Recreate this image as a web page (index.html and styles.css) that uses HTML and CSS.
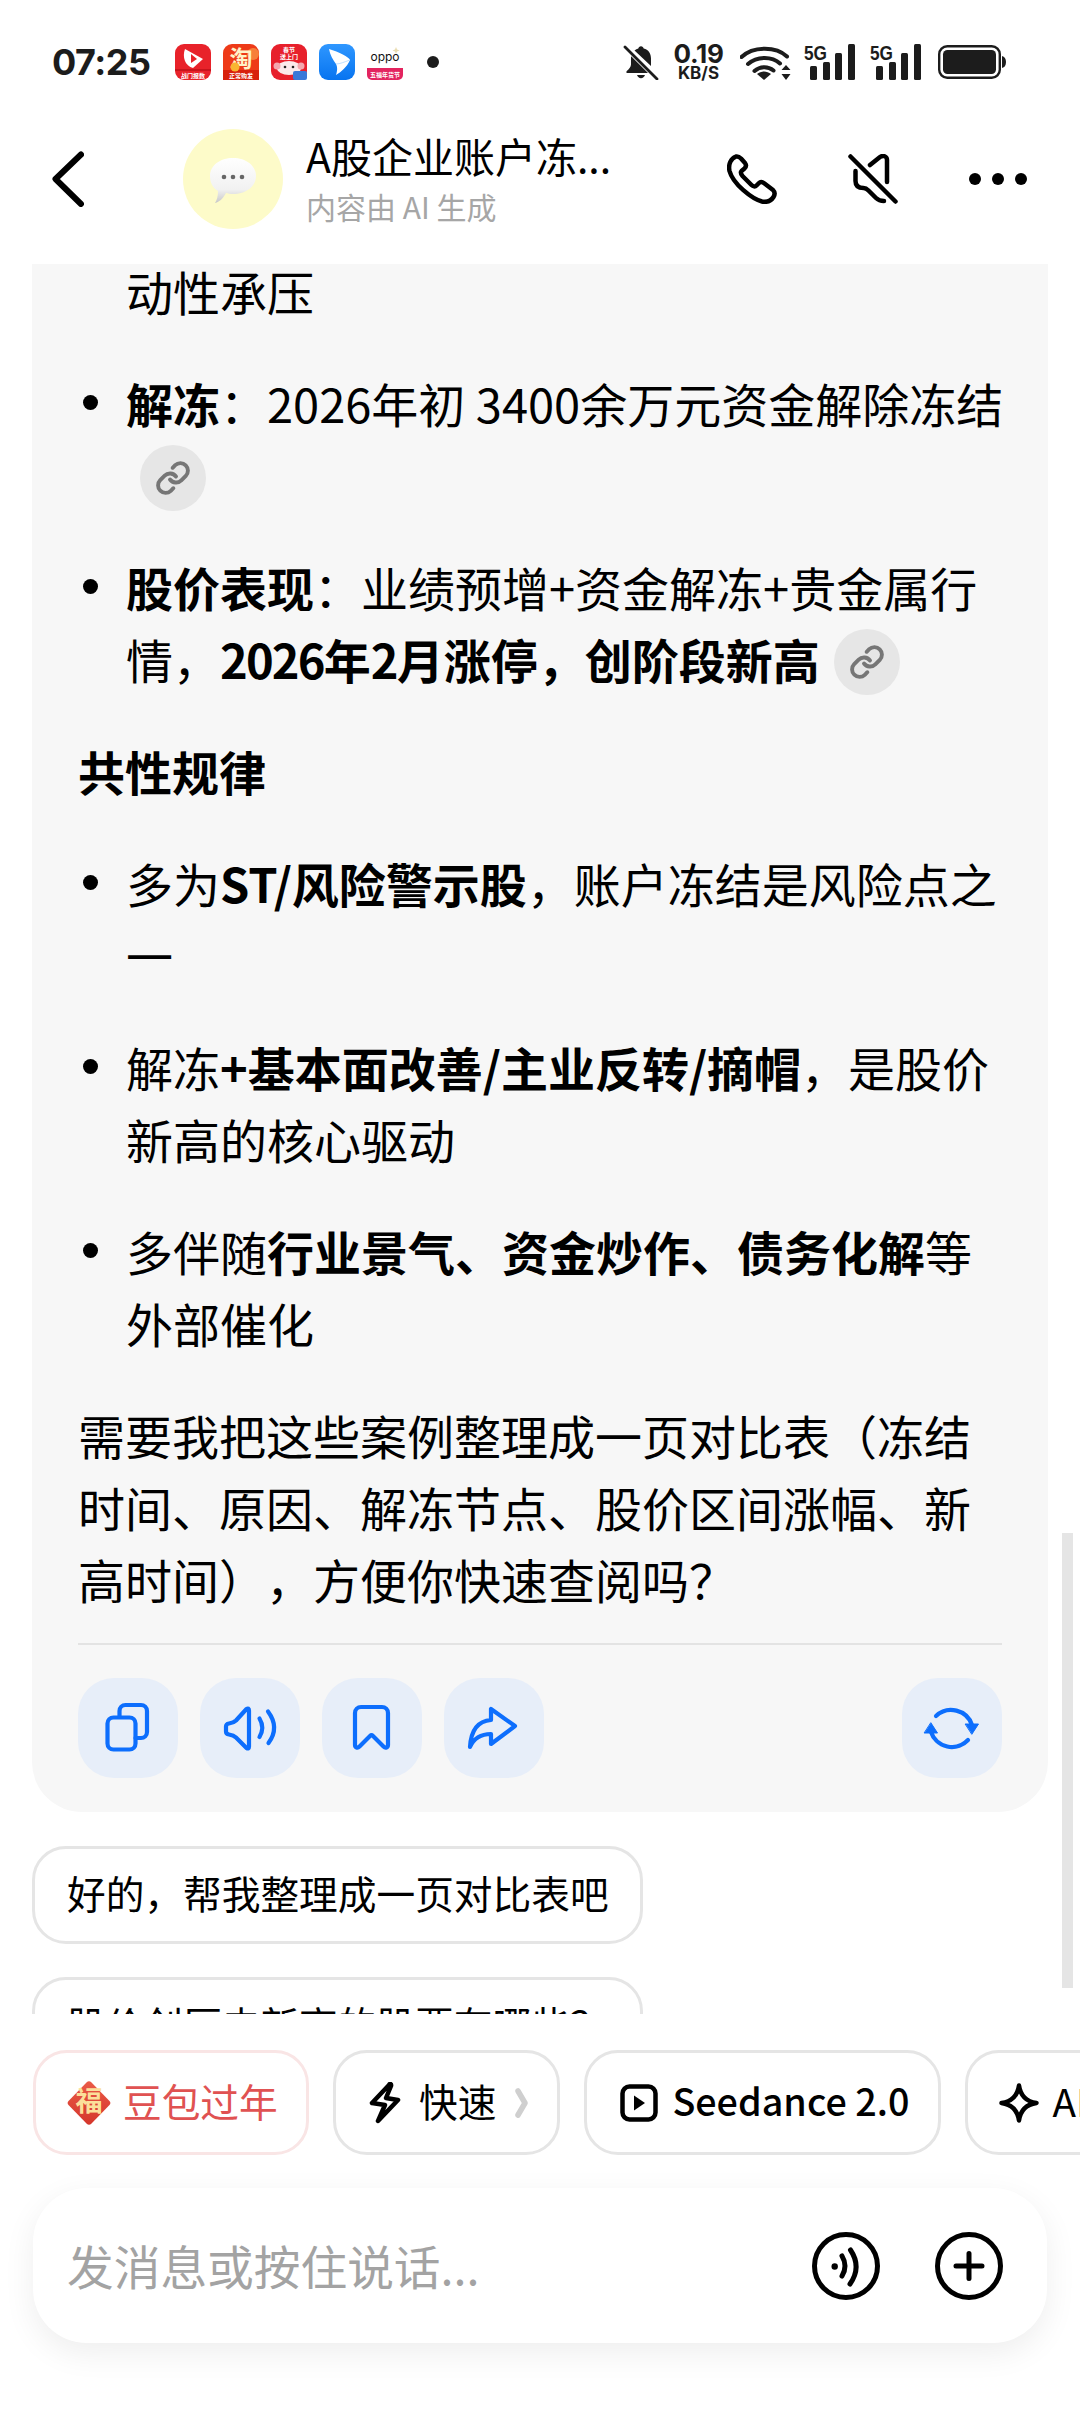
FILE: index.html
```html
<!DOCTYPE html>
<html lang="zh-CN">
<head>
<meta charset="utf-8">
<title>A股企业账户冻结</title>
<link rel="stylesheet" href="styles.css">
</head>
<body>
<svg class="defs" width="0" height="0" aria-hidden="true">
  <symbol id="link" viewBox="0 0 24 24"><path d="M10 13a5 5 0 0 0 7.54.54l3-3a5 5 0 0 0-7.07-7.07l-1.72 1.71"/><path d="M14 11a5 5 0 0 0-7.54-.54l-3 3a5 5 0 0 0 7.07 7.07l1.71-1.71"/></symbol>
</svg>
<div class="screen">
  <div class="status">
    <span class="time">07:25</span>
    <div class="apps">
      <svg class="app" viewBox="0 0 36 36"><rect width="36" height="36" rx="9" fill="#e8222a"/><path d="M0 25h36v2H0z" fill="#c8141c"/><path d="M10 5 L28 15 L18 24 C10 22 7 13 10 5Z" fill="#fff"/><path d="M16 10l6 5-6 4z" fill="#e8222a"/><text x="18" y="33.500" class="app-label">战门报数</text></svg>
      <svg class="app" viewBox="0 0 36 36"><rect width="36" height="36" rx="9" fill="#ee3a18"/><rect y="26" width="36" height="10" fill="#d8200c"/><circle cx="30" cy="10" r="6" fill="#f7803a"/><text x="18" y="23" class="app-big">淘</text><circle cx="12" cy="23" r="4.500" fill="#f9b531"/><text x="18" y="34" class="app-label">正常购发</text></svg>
      <svg class="app" viewBox="0 0 36 36"><rect width="36" height="36" rx="9" fill="#e7202c"/><text x="18" y="8" class="app-label">春节</text><text x="18" y="15" class="app-label">送上门</text><ellipse cx="18" cy="24" rx="12" ry="7" fill="#fbe9ea"/><circle cx="6" cy="22" r="3.500" fill="#f4a7ae"/><circle cx="30" cy="22" r="3.500" fill="#f4a7ae"/><circle cx="14" cy="23" r="1.300" fill="#222"/><circle cx="22" cy="23" r="1.300" fill="#222"/><rect x="22" y="27" width="14" height="9" rx="2" fill="#3a78d8"/></svg>
      <svg class="app" viewBox="0 0 36 36"><defs><linearGradient id="blue" x1="0" y1="0" x2="0" y2="1"><stop offset="0" stop-color="#2f97ff"/><stop offset="1" stop-color="#0774f0"/></linearGradient></defs><rect width="36" height="36" rx="9" fill="url(#blue)"/><path d="M10 5 C20 8 30 13 31 16 C28 23 22 28 17 31 C19 25 18 22 17 20 C14 16 11 11 10 5Z" fill="#fff"/><path d="M17 20 C21 20 25 18 31 16" stroke="#bfe0ff" stroke-width="1" fill="none"/></svg>
      <svg class="app" viewBox="0 0 36 36"><text x="18" y="17" class="oppo">oppo</text><path d="M29 3l1 2.500 2.500 1-2.500 1-1 2.500-1-2.500-2.500-1 2.500-1z" fill="#e9dcb0"/><path d="M0 24h36v7a5 5 0 0 1-5 5H5a5 5 0 0 1-5-5z" fill="#e3245f"/><text x="18" y="33" class="app-label">五福年货节</text></svg>
    </div>
    <span class="status-dot"></span>
    <div class="status-right">
      <svg class="s-bell" viewBox="0 0 36 35"><path d="M18 1.200c1.400 0 2.500 1 2.700 2.400 4.700 1.100 7.300 5 7.300 10v7.300L11.500 5.500C12.700 4.600 14 4 15.300 3.600 15.500 2.200 16.600 1.200 18 1.200zM8.200 11.300 25 28H3.500v-1.800c2.400-2 4.500-4.200 4.500-6.700v-6c0-.8 0-1.500.2-2.200zM14 30h8c-.6 2-2.200 3.200-4 3.200S14.600 32 14 30z" fill="#1c1c1c"/><path d="M2 2l32 32" stroke="#1c1c1c" stroke-width="2.800" stroke-linecap="round"/></svg>
      <div class="speed"><span class="speed-num">0.19</span><span class="speed-unit">KB/S</span></div>
      <svg class="s-wifi" viewBox="0 0 51 36" fill="none" stroke="#1c1c1c" stroke-width="4" stroke-linecap="round"><path d="M1.500 13C13 2 36 2 47 12.500"/><path d="M8 20C17 12 32 12 40 19.500"/><path d="M14.500 27C20 22 28 22 33.500 26.500"/><path d="M24 36l-7-6c4-3.500 10-3.500 14 0z" fill="#1c1c1c" stroke="none"/><path d="M46 21l4.500 5h-9zM46 36l4.500-6h-9z" fill="#1c1c1c" stroke="none"/></svg>
      <svg class="s-signal" viewBox="0 0 51 36"><text x="0" y="16" class="five-g" textLength="23" lengthAdjust="spacingAndGlyphs">5G</text><rect x="6" y="22" width="7" height="14" rx="1.500"/><rect x="19" y="18" width="7" height="18" rx="1.500"/><rect x="31" y="9" width="7" height="27" rx="1.500"/><rect x="44" y="0" width="7" height="36" rx="1.500"/></svg>
      <svg class="s-signal second" viewBox="0 0 51 36"><text x="0" y="16" class="five-g" textLength="23" lengthAdjust="spacingAndGlyphs">5G</text><rect x="6" y="22" width="7" height="14" rx="1.500"/><rect x="19" y="18" width="7" height="18" rx="1.500"/><rect x="31" y="9" width="7" height="27" rx="1.500"/><rect x="44" y="0" width="7" height="36" rx="1.500"/></svg>
      <svg class="s-batt" viewBox="0 0 68 34"><rect x="1.200" y="1.200" width="60.600" height="31.600" rx="8" fill="none" stroke="#1c1c1c" stroke-width="2.400"/><rect x="5" y="5" width="53" height="24" rx="4.500" fill="#1c1c1c"/><path d="M64 11c2.500.5 4 2.500 4 6s-1.500 5.500-4 6z" fill="#1c1c1c"/></svg>
    </div>
  </div>

  <header class="head">
    <svg class="back" viewBox="0 0 32 56" fill="none"><path d="M29 3.500 3.500 28 29 53" /></svg>
    <div class="avatar">
      <svg class="bubble" viewBox="0 0 46 46"><defs><linearGradient id="bub" x1="0" y1="0" x2="0" y2="1"><stop offset="0" stop-color="#fff"/><stop offset=".7" stop-color="#f1f1f1"/><stop offset="1" stop-color="#c8c8c8"/></linearGradient></defs><path d="M23 0c13 0 23 7.500 23 18s-10 18-23 18c-3 0-5-.5-7-1-2 4-6 9-11 10 2-3 3-7 3-12C3 30 0 25 0 18 0 7.500 10 0 23 0z" fill="url(#bub)"/><circle cx="14" cy="19" r="2.300" fill="#666"/><circle cx="23" cy="19" r="2.300" fill="#666"/><circle cx="32" cy="19" r="2.300" fill="#666"/></svg>
    </div>
    <div class="titles">
      <div class="title">A股企业账户冻...</div>
      <div class="subtitle">内容由 AI 生成</div>
    </div>
    <div class="head-actions">
      <svg class="phone" viewBox="0 0 50 50" fill="none"><path d="M9 2.500C11 2 12.500 3 14 4.500L18 9C19.500 11 19 13 17.500 14.500L14.500 17C13.500 18 14 20 15.500 22L24.500 31C26 32.500 28 33 29.500 31.500L32 29C33.500 27.500 35.500 28 37.500 29.500L46 36C48 38 48 40.500 46.500 43C44 47 40 48.500 35 47.500C25 45 6 30 2.500 17C1 10 4 4.500 9 2.500Z"/></svg>
      <svg class="mute" viewBox="0 0 50 50" fill="none"><path d="M2.500 2.500l45 45"/><path d="M22 11 32 3c3-2 7-1 7 3v22"/><path d="M7.500 17v10c0 5 3 7 8 7 2 0 3 .5 5 2.500L28 44c3 3 5 3 8 3"/></svg>
      <div class="more"><span></span><span></span><span></span></div>
    </div>
  </header>

  <main class="chat">
    <section class="card">
      <ul class="list">
        <li class="cont">动性承压</li>
        <li><b>解冻</b>：2026年初 3400余万元资金解除冻结<span class="ref"><svg class="ref-icon"><use href="#link"/></svg></span></li>
        <li><b>股价表现</b>：业绩预增+资金解冻+贵金属行情，<b><span class="num">2026</span>年<span class="num">2</span>月涨停，创阶段新高</b><span class="ref"><svg class="ref-icon"><use href="#link"/></svg></span></li>
      </ul>
      <p class="para"><b>共性规律</b></p>
      <ul class="list">
        <li>多为<b>ST/风险警示股</b>，账户冻结是风险点之一</li>
        <li>解冻<b>+基本面改善/主业反转/摘帽</b>，是股价新高的核心驱动</li>
        <li>多伴随<b>行业景气、资金炒作、债务化解</b>等外部催化</li>
      </ul>
      <p class="para">需要我把这些案例整理成一页对比表（冻结时间、原因、解冻节点、股价区间涨幅、新高时间），方便你快速查阅吗？</p>
      <div class="divider"></div>
      <div class="actions">
        <button class="act"><svg viewBox="0 0 100 100"><rect x="29.500" y="39.500" width="28" height="32" rx="6"/><path d="M41.500 39v-6a6 6 0 0 1 6-6H63a6 6 0 0 1 6 6v21a6 6 0 0 1-6 6h-5.500"/></svg></button>
        <button class="act"><svg viewBox="0 0 100 100"><path d="M46.500 31 36 42.500c-1.500 1.500-3.500 2.500-7 3-2 .3-3 1.500-3 3v5c0 1.500 1 2.700 3 3 3.500.5 5.500 1.500 7 3L46.500 70c1.500 1 2.500.5 2.500-1.500V32.500c0-2-1-2.500-2.500-1.500z"/><path d="M59.500 40.500Q65 49.500 59.500 59"/><path d="M68 33.500Q80 49.500 68.500 65"/></svg></button>
        <button class="act"><svg viewBox="0 0 100 100"><path d="M33 35a6 6 0 0 1 6-6h21a6 6 0 0 1 6 6v32c0 2.500-2.500 3.500-4.500 1.500L51 58c-1-1-2-1-3 0L37.500 68.500C35.500 70.500 33 69.500 33 67z"/></svg></button>
        <button class="act"><svg viewBox="0 0 100 100"><path d="M47 31v11C34 43 27 52 26 69c4-9 11-13 21-13v10l24-18z"/></svg></button>
        <button class="act last"><svg viewBox="0 0 100 100"><path d="M34 38A22 22 0 0 1 70 47"/><path d="M63.500 46h13L70 56z" class="solid"/><path d="M66 62A22 22 0 0 1 29 54"/><path d="M22.500 55h13L29 45z" class="solid"/></svg></button>
      </div>
    </section>
    <div class="suggest"><span>好的，帮我整理成一页对比表吧</span></div>
    <div class="suggest"><span>股价创历史新高的股票有哪些？</span></div>
  </main>
  <div class="scrollbar"></div>

  <nav class="chips">
    <div class="chip festive">
      <svg class="fu" viewBox="0 0 44 44"><defs><linearGradient id="fu" x1="0" y1="0" x2="0" y2="1"><stop offset="0" stop-color="#ea5a47"/><stop offset="1" stop-color="#d5362b"/></linearGradient></defs><path d="M19.500 1.500 1.500 20a3 3 0 0 0 0 4l18 18.500a3.500 3.500 0 0 0 5 0l18-18.500a3 3 0 0 0 0-4l-18-18.500a3.500 3.500 0 0 0-5 0z" fill="url(#fu)"/><text x="22" y="30" class="fu-text">福</text></svg>
      <span>豆包过年</span>
    </div>
    <div class="chip fast">
      <svg class="bolt" viewBox="0 0 32 42" fill="none"><path d="M20 3 3 21l13 2-7 16 20-21-12-2 5-12c.5-2-1-3-2-1z"/></svg>
      <span>快速</span>
      <svg class="chev" viewBox="0 0 13 30" fill="none"><path d="M3 3l7 12-7 12"/></svg>
    </div>
    <div class="chip video">
      <svg class="play" viewBox="0 0 38 38" fill="none"><rect x="2.500" y="2.500" width="33" height="33" rx="7"/><path d="M14 11.500v15l11-7.500z" class="fill"/></svg>
      <span class="medium">Seedance 2.0</span>
    </div>
    <div class="chip create">
      <svg class="star" viewBox="0 0 40 40" fill="none"><path d="M20 2.500C21.500 13 27 18.500 37.500 20 27 21.500 21.500 27 20 37.500 18.500 27 13 21.500 2.500 20 13 18.500 18.500 13 20 2.500z"/></svg>
      <span>AI 创作</span>
    </div>
  </nav>

  <div class="composer">
    <span class="placeholder">发消息或按住说话...</span>
    <svg class="round" viewBox="0 0 68 68" fill="none"><circle cx="34" cy="34" r="31.500"/><circle cx="22.700" cy="34.500" r="3.200" class="fill"/><path d="M30 24Q36 34 30 44"/><path d="M38.500 18Q50 35 38 52"/></svg>
    <svg class="round plus" viewBox="0 0 68 68" fill="none"><circle cx="34" cy="34" r="31.500"/><path d="M34 21.500v25M21 34h26"/></svg>
  </div>
</div>
</body>
</html>
```
FILE: styles.css
```css
* { box-sizing: border-box; }
html, body { margin: 0; padding: 0; background: #fff; }
body { font-family: "Noto Sans CJK SC", "Noto Sans", sans-serif; color: #000; text-spacing-trim: space-all; }
.defs { position: absolute; }
.screen { position: relative; width: 1080px; height: 2412px; overflow: hidden; background: #fff; display: flex; flex-direction: column; }

/* status bar */
.status { height: 124px; flex: none; display: flex; align-items: center; padding: 0 74px 0 52px; color: #1c1c1c; }
.time { font-family: Inter, Roboto, sans-serif; font-weight: 700; font-size: 36px; width: 123px; letter-spacing: -0.5px; }
.apps { display: flex; gap: 12px; }
.app { width: 36px; height: 36px; display: block; }
.app-label { font-size: 6px; fill: #fff; text-anchor: middle; font-weight: 700; }
.app-big { font-size: 23px; fill: #fff3c8; text-anchor: middle; font-weight: 700; }
.oppo { font-family: Inter, sans-serif; font-size: 12px; fill: #111; text-anchor: middle; }
.status-dot { width: 12px; height: 12px; border-radius: 50%; background: #1c1c1c; margin-left: 24px; }
.status-right { margin-left: auto; display: flex; align-items: center; }
.s-bell { width: 36px; height: 35px; }
.speed { display: flex; flex-direction: column; align-items: center; margin-left: 14px; width: 51px; font-family: Inter, Roboto, sans-serif; font-weight: 700; white-space: nowrap; }
.speed-num { font-size: 26px; line-height: 22px; letter-spacing: -0.3px; }
.speed-unit { font-size: 17px; line-height: 16px; }
.s-wifi { width: 51px; height: 36px; margin-left: 16px; }
.s-signal { width: 51px; height: 36px; margin-left: 13px; fill: #1c1c1c; }
.s-signal.second { margin-left: 15px; }
.five-g { font-family: "Liberation Sans", sans-serif; font-weight: 700; font-size: 21px; }
.s-batt { width: 68px; height: 34px; margin-left: 17px; }

/* header */
.head { height: 140px; flex: none; display: flex; align-items: center; padding: 0 53px 30px 52px; }
.back { width: 32px; height: 56px; flex: none; }
.back path { stroke: #000; stroke-width: 6; stroke-linecap: round; stroke-linejoin: round; }
.avatar { width: 100px; height: 100px; border-radius: 50%; background: #fdfbc9; margin-left: 99px; display: flex; align-items: center; justify-content: center; flex: none; }
.bubble { width: 46px; height: 46px; margin-top: 4px; }
.titles { margin: 0 0 5px 23px; display: flex; flex-direction: column; }
.title { font-size: 41px; line-height: 52px; white-space: nowrap; }
.subtitle { font-size: 30px; line-height: 38px; color: #a6a6a6; white-space: nowrap; margin-top: 6px; }
.head-actions { margin-left: auto; display: flex; align-items: center; gap: 71px; }
.phone, .mute { width: 50px; height: 50px; display: block; }
.phone path, .mute path { stroke: #000; stroke-width: 4.500; stroke-linecap: round; stroke-linejoin: round; }
.more { display: flex; gap: 11px; }
.more span { width: 12px; height: 12px; border-radius: 50%; background: #000; }

/* conversation */
.chat { height: 1750px; flex: none; overflow: hidden; padding: 0 32px; }
.card { margin-top: -100px; padding: 91px 46px 34px; background: #f7f7f7; border-radius: 50px; }
.list { margin: 0 -6px 40px 0; padding: 0 0 0 48px; list-style: none; }
.list li { position: relative; font-size: 47px; line-height: 72px; margin-bottom: 40px; }
.list li::before { content: ""; position: absolute; left: -43px; top: 28px; width: 15px; height: 15px; border-radius: 50%; background: #000; }
.list li.cont::before { display: none; }
.list li:last-child { margin-bottom: 0; }
.para { font-size: 47px; line-height: 72px; margin: 0 0 40px; }
.para:last-of-type { margin-bottom: 0; }
b { font-weight: 700; }
.num { letter-spacing: -1.8px; }
.ref { display: inline-flex; align-items: center; justify-content: center; width: 66px; height: 66px; border-radius: 50%; background: #e6e6e6; margin-left: 14px; vertical-align: middle; margin-top: -8px; }
.ref-icon { width: 36px; height: 36px; fill: none; stroke: #767676; stroke-width: 2.600; stroke-linecap: round; stroke-linejoin: round; }
.divider { height: 2px; background: #e3e3e3; margin-top: 28px; }
.actions { display: flex; gap: 22px; margin-top: 33px; }
.act { width: 100px; height: 100px; padding: 0; border: 0; border-radius: 36px; background: #e7eef9; flex: none; }
.act.last { margin-left: auto; }
.act svg { width: 100px; height: 100px; display: block; fill: none; stroke: #0d6efd; stroke-width: 4.200; stroke-linecap: round; stroke-linejoin: round; }
.act svg .solid { fill: #0d6efd; stroke-width: 1; }
.suggest { width: 611px; height: 98px; margin-top: 33px; border: 3px solid #e5e5e5; border-radius: 34px; display: flex; align-items: center; padding-left: 32px; font-size: 38.700px; white-space: nowrap; background: #fff; }
.suggest span { padding-bottom: 6px; }
.card + .suggest { margin-top: 34px; }
.scrollbar { position: absolute; left: 1062px; top: 1533px; width: 11px; height: 455px; background: #e5e5e5; }

/* chips */
.chips { flex: none; height: 105px; margin-top: 36px; padding-left: 33px; display: flex; gap: 24px; overflow: hidden; }
.chip { flex: none; height: 105px; display: flex; align-items: center; border: 3px solid #e5e5e5; border-radius: 34px; padding: 0 30px 0 33px; font-size: 38.700px; white-space: nowrap; background: #fff; }
.chip span { padding-bottom: 6px; }
.chip.festive { border-color: #f9e5e5; color: #e05252; width: 276px; padding-left: 31px; }
.chip.fast { padding-right: 29px; }
.chip.video { padding: 0 29px 0 33px; }
.chip.create { padding-left: 31px; }
.fu { width: 44px; height: 44px; margin-right: 12px; flex: none; }
.fu-text { font-size: 27px; font-weight: 700; text-anchor: middle; fill: #fbdf9a; }
.bolt { width: 32px; height: 42px; margin-right: 18px; flex: none; }
.bolt path, .chev path, .play rect, .star path { stroke: #000; stroke-width: 4.500; stroke-linecap: round; stroke-linejoin: round; }
.chev { width: 13px; height: 30px; margin-left: 19px; flex: none; }
.chev path { stroke: #cfcfcf; stroke-width: 5.500; }
.play { width: 38px; height: 38px; margin-right: 14px; flex: none; }
.play .fill { fill: #000; }
.medium { font-weight: 500; font-size: 37.700px; }
.star { width: 40px; height: 40px; margin-right: 13px; flex: none; }

/* composer */
.composer { flex: none; height: 155px; margin: 33px 33px 0; border-radius: 54px; background: #fff; box-shadow: 0 10px 32px rgba(0, 0, 0, .07); display: flex; align-items: center; padding: 0 44px 0 34px; }
.placeholder { font-size: 46.700px; color: #a3a3a3; margin-right: auto; white-space: nowrap; padding-bottom: 3px; }
.round { width: 68px; height: 68px; flex: none; }
.round.plus { margin-left: 55px; }
.round circle, .round path { stroke: #000; stroke-width: 5; stroke-linecap: round; }
.round .fill { fill: #000; stroke: none; }
```
